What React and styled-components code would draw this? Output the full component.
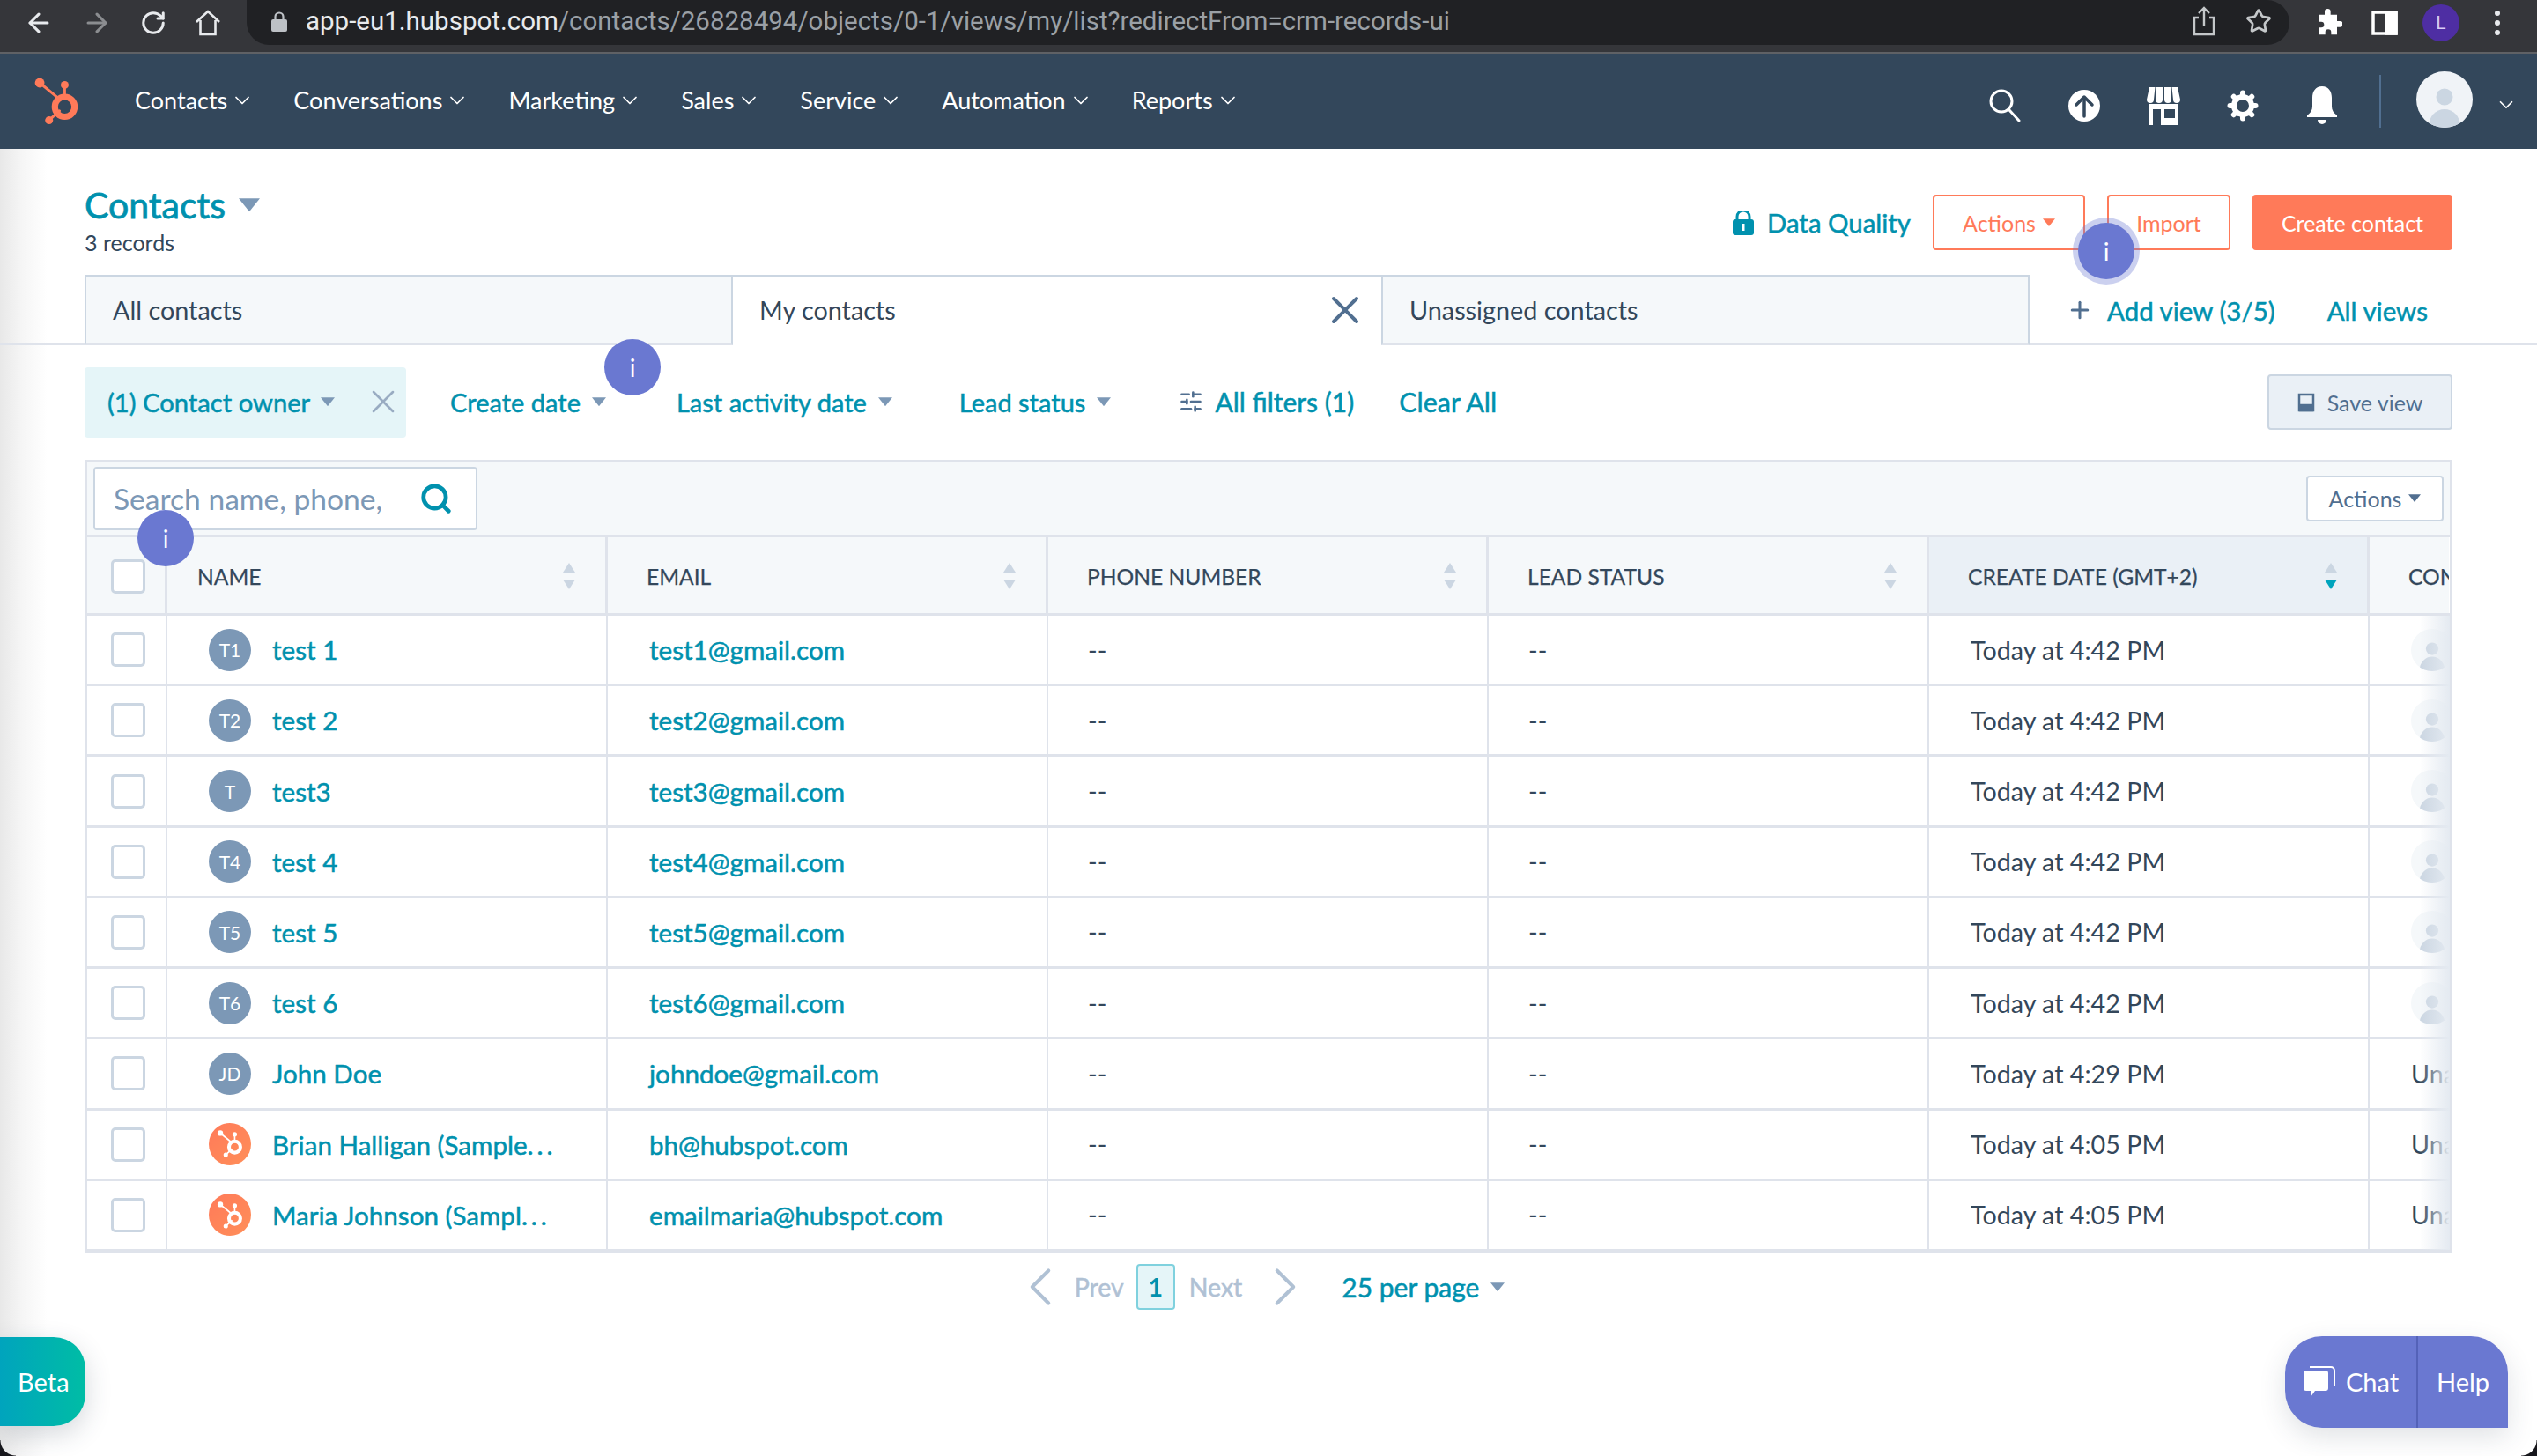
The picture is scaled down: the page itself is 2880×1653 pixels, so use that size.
import React from "react";
import styled, { createGlobalStyle, css } from "styled-components";
import { ArrowLeft, ArrowRight, RotateCw, Search, SlidersHorizontal, Star, X, ChevronDown, ChevronLeft, ChevronRight, Plus } from "lucide-react";

const GlobalStyle = createGlobalStyle`
  html, body { margin: 0; padding: 0; background: #fff; }
  * { box-sizing: border-box; }
  body { font-family: Lato, "Open Sans", sans-serif; color: #33475b; }
`;

// Lato has no medium cut here, so thicken the regular a little
const medium = css`
  font-weight: 400;
  -webkit-text-stroke: 0.5px currentColor;
`;

const Page = styled.div`
  position: relative;
  width: 2880px;
  height: 1653px;
  overflow: hidden;
  background: #fff;
`;

/* browser chrome */
const BrowserBar = styled.div`
  height: 61px;
  background: #35363a;
  border-bottom: 2px solid #5f6165;
  display: flex;
  align-items: flex-start;
  color: #e8eaed;
`;
const BrowserButtons = styled.div`
  width: 280px;
  height: 51px;
  display: flex;
  align-items: center;
  gap: 32px;
  padding-left: 27px;
`;
const UrlPill = styled.div`
  width: 2319px;
  height: 51px;
  background: #202124;
  border-radius: 0 26px 26px 26px;
  display: flex;
  align-items: center;
  padding: 0 20px 3px 28px;
  font-family: Roboto, sans-serif;
  font-size: 29.5px;
`;
const UrlText = styled.div`
  flex: 1;
  margin-left: 21px;
  color: #9aa0a6;
  white-space: nowrap;
  b { font-weight: 400; color: #e8eaed; }
`;
const PillIcons = styled.div`
  display: flex;
  align-items: center;
  gap: 34px;
  color: #c4c7c9;
`;
const BrowserRight = styled.div`
  flex: 1;
  height: 51px;
  display: flex;
  align-items: center;
  padding-left: 12px;
  color: #fff;
`;
const BrowserSlot = styled.div`
  width: 64px;
  display: flex;
  align-items: center;
  justify-content: center;
`;
const ProfileDot = styled.div`
  width: 42px;
  height: 42px;
  border-radius: 50%;
  background: #4e2ea3;
  color: #d9ccf5;
  font: 400 21px Roboto, sans-serif;
  display: flex;
  align-items: center;
  justify-content: center;
`;

/* hubspot nav */
const Nav = styled.nav`
  height: 108px;
  background: #33475b;
  display: flex;
  align-items: center;
  position: relative;
`;
const LogoSlot = styled.div`
  width: 153px;
  padding-left: 38px;
  display: flex;
  align-items: center;
  height: 100%;
`;
const NavLinks = styled.div`
  display: flex;
  gap: 44px;
  flex: 1;
  margin-top: -2px;
`;
const NavLink = styled.div`
  display: flex;
  align-items: center;
  gap: 3px;
  color: #fff;
  font-size: 27px;
  line-height: 34px;
  white-space: nowrap;
`;
const NavIcons = styled.div`
  display: flex;
  align-items: center;
  height: 100%;
  padding-right: 22px;
`;
const NavIcon = styled.div`
  width: 90px;
  height: 46px;
  margin-top: 10px;
  display: flex;
  align-items: center;
  justify-content: center;
  color: #fff;
`;
const NavDivider = styled.div`
  width: 2px;
  height: 60px;
  margin: 0 40px 0 20px;
  background: #516f90;
`;
const UserCircle = styled.div`
  width: 64px;
  height: 64px;
  margin-top: -4px;
  margin-right: 25px;
  border-radius: 50%;
  overflow: hidden;
`;
const UserChevron = styled(ChevronDown)`
  margin-top: 8px;
  color: #fff;
`;

/* page header */
const Content = styled.main`
  background: linear-gradient(90deg, #e8e8e8 0, #f6f6f6 26px, #fff 54px);
  height: 1484px;
`;
const HeaderRow = styled.div`
  height: 143px;
  padding: 0 96px;
  display: flex;
  justify-content: space-between;
`;
const TitleBlock = styled.div`
  padding-top: 42px;
`;
const Title = styled.h1`
  margin: 0 0 4px;
  display: flex;
  align-items: center;
  gap: 15px;
  font-size: 41px;
  line-height: 44px;
  font-weight: 400;
  -webkit-text-stroke: 0.8px currentColor;
  color: #0091ae;
`;
const Records = styled.div`
  font-size: 25px;
  line-height: 32px;
  color: #33475b;
`;
const HeaderActions = styled.div`
  padding-top: 52px;
  display: flex;
  align-items: flex-start;
`;
const DataQuality = styled.div`
  ${medium}
  display: flex;
  align-items: center;
  height: 63px;
  gap: 15px;
  margin-right: 25px;
  color: #0091ae;
  font-size: 29.4px;
`;
const OutlineButton = styled.button`
  height: 63px;
  width: ${(p) => p.$width}px;
  margin-right: 25px;
  border: 2px solid #ff7a59;
  border-radius: 4px;
  background: #fff;
  color: #ff7a59;
  font: 400 25px Lato, sans-serif;
  display: flex;
  align-items: center;
  justify-content: center;
  gap: 8px;
  padding: 0;
`;
const PrimaryButton = styled(OutlineButton)`
  margin-right: 0;
  background: #ff7a59;
  color: #fff;
`;

/* view tabs */
const TabRow = styled.div`
  height: 80px;
  padding-left: 96px;
  display: flex;
  border-bottom: 3px solid #dfe3eb;
`;
const Tab = styled.div`
  width: 736px;
  height: 80px;
  padding: 0 30px ${(p) => (p.$active ? "3px" : "0")} 30px;
  display: flex;
  align-items: center;
  justify-content: space-between;
  background: ${(p) => (p.$active ? "#fff" : "#f5f8fa")};
  border-top: 3px solid #cbd6e2;
  border-left: ${(p) => (p.$active ? "0" : "2px solid #cbd6e2")};
  border-right: ${(p) => (p.$active ? "0" : "2px solid #cbd6e2")};
  border-bottom: ${(p) => (p.$active ? "0" : "3px solid #dfe3eb")};
  font-size: 28.8px;
  color: #33475b;
  svg { margin-right: -15px; }
`;
const TabLinks = styled.div`
  ${medium}
  display: flex;
  align-items: center;
  padding: 3px 0 0 42px;
  color: #0091ae;
  font-size: 29.5px;
`;
const AddView = styled.div`
  display: flex;
  align-items: center;
  gap: 16px;
  margin-right: 59px;
  svg { color: #516f90; }
`;

/* filters */
const FilterRow = styled.div`
  height: 130px;
  padding: 25px 96px 0;
  display: flex;
  align-items: flex-start;
  gap: 50px;
`;
const OwnerPill = styled.div`
  ${medium}
  width: 365px;
  height: 80px;
  padding: 0 4px 2px 26px;
  border-radius: 4px;
  background: #e5f5f8;
  display: flex;
  align-items: center;
  color: #0091ae;
  font-size: 29.2px;
  white-space: nowrap;
  gap: 12px;
  svg:last-child { margin-left: auto; color: #99acc2; }
`;
const FilterLink = styled.div`
  ${medium}
  height: 80px;
  padding-bottom: 2px;
  display: flex;
  align-items: center;
  gap: ${(p) => p.$gap || 13}px;
  margin-right: ${(p) => p.$trail || 0}px;
  color: #0091ae;
  font-size: ${(p) => p.$size || 29}px;
  white-space: nowrap;
`;
const SaveView = styled.button`
  margin-left: auto;
  margin-top: 8px;
  width: 210px;
  height: 63px;
  border: 2px solid #cbd6e2;
  border-radius: 4px;
  background: #eaf0f6;
  color: #516f90;
  font: 400 25px Lato, sans-serif;
  display: flex;
  align-items: center;
  justify-content: center;
  gap: 14px;
  padding: 0;
`;

/* table */
const Table = styled.section`
  position: relative;
  margin: 0 96px;
  width: 2688px;
  height: 900px;
  border: 3px solid #dfe3eb;
  overflow: hidden;
`;
const TableTools = styled.div`
  height: 85px;
  background: #f5f8fa;
  padding: 5px 7px 0;
  display: flex;
  align-items: flex-start;
  justify-content: space-between;
  border-bottom: 3px solid #dfe3eb;
`;
const SearchBox = styled.div`
  width: 436px;
  height: 72px;
  padding: 0 26px 0 21px;
  background: #fff;
  border: 2px solid #cbd6e2;
  border-radius: 4px;
  display: flex;
  align-items: center;
  justify-content: space-between;
  color: #7c98b6;
  font-size: 33.6px;
  white-space: nowrap;
  svg { color: #0091ae; }
`;
const SmallActions = styled.button`
  width: 156px;
  height: 52px;
  margin-top: 10px;
  border: 2px solid #cbd6e2;
  border-radius: 4px;
  background: #fff;
  color: #516f90;
  font: 400 25px Lato, sans-serif;
  display: flex;
  align-items: center;
  justify-content: center;
  gap: 8px;
  padding: 0;
`;
const Row = styled.div`
  display: grid;
  grid-template-columns: 91px 500px 500px 500px 500px 500px 90px;
  height: ${(p) => (p.$head ? "89px" : "80.22px")};
  border-bottom: 3px solid #dfe3eb;
`;
const HeadCell = styled.div`
  display: flex;
  align-items: center;
  justify-content: space-between;
  padding: 2px 34px 0 ${(p) => p.$pad ?? 44}px;
  background: ${(p) => (p.$sorted ? "#eaf0f6" : "#f5f8fa")};
  border-right: ${(p) => (p.$last ? "0" : "3px solid #dfe3eb")};
  font-size: 24.6px;
  -webkit-text-stroke: 0.25px currentColor;
  color: #33475b;
  white-space: nowrap;
  overflow: hidden;
`;
const Cell = styled.div`
  display: flex;
  align-items: center;
  gap: 24px;
  padding-left: ${(p) => p.$pad ?? 47}px;
  border-right: ${(p) => (p.$last ? "0" : "2px solid #dfe3eb")};
  font-size: ${(p) => (p.$link ? "29.6px" : "28.7px")};
  color: ${(p) => (p.$link ? "#0091ae" : "#33475b")};
  ${(p) => p.$link && medium}
  white-space: nowrap;
  overflow: hidden;
`;
const Dots = styled.span`
  letter-spacing: 4px;
`;
const Checkbox = styled.div`
  width: 39px;
  height: 39px;
  flex: none;
  border: 3px solid #cbd6e2;
  border-radius: 5px;
  background: #fff;
`;
const Avatar = styled.div`
  width: 48px;
  height: 48px;
  flex: none;
  border-radius: 50%;
  background: ${(p) => (p.$brand ? "linear-gradient(135deg, #ff7a59, #ff8f59)" : "#7c98b6")};
  color: #fff;
  font-size: 21px;
  font-weight: 400;
  -webkit-text-stroke: 0;
  display: flex;
  align-items: center;
  justify-content: center;
`;
const GhostAvatar = styled.div`
  width: 48px;
  height: 48px;
  flex: none;
  border-radius: 50%;
  background: #f5f8fa;
  overflow: hidden;
`;
const FadeEdge = styled.div`
  position: absolute;
  top: 174px;
  right: 0;
  bottom: 0;
  width: 34px;
  background: linear-gradient(90deg, rgba(234, 240, 246, 0), #e4eaf1);
  pointer-events: none;
`;

/* pager */
const Pager = styled.div`
  padding: 13px 28px 0 0;
  display: flex;
  align-items: center;
  justify-content: center;
  font-size: 28.5px;
  height: 65px;
`;
const PagerWord = styled.span`
  ${medium}
  color: #b0c1d4;
  margin-left: ${(p) => p.$before || 0}px;
  margin-right: ${(p) => p.$after || 0}px;
`;
const PageNumber = styled.div`
  width: 44px;
  height: 52px;
  margin: 0 16px 0 14px;
  border: 2px solid #7fd1de;
  border-radius: 4px;
  background: #e5f5f8;
  color: #0091ae;
  font-weight: 700;
  display: flex;
  align-items: center;
  justify-content: center;
`;
const PerPage = styled.div`
  ${medium}
  margin-left: 27px;
  display: flex;
  align-items: center;
  gap: 13px;
  color: #0091ae;
  font-size: 30px;
`;

/* things floating over the page */
const Beacon = styled.div`
  position: absolute;
  left: ${(p) => p.$x - 32}px;
  top: ${(p) => p.$y - 32}px;
  width: 64px;
  height: 64px;
  border-radius: 50%;
  background: #6a78d1;
  box-shadow: ${(p) => (p.$ring ? "0 0 0 6px rgba(106, 120, 209, 0.35)" : "none")};
  color: #fff;
  font: 400 28px Lato, sans-serif;
  display: flex;
  align-items: center;
  justify-content: center;
`;
const BetaTab = styled.div`
  position: absolute;
  left: 0;
  top: 1518px;
  width: 97px;
  height: 101px;
  padding-left: 20px;
  border-radius: 0 36px 36px 0;
  background: linear-gradient(90deg, #00a4bd, #00bda5);
  box-shadow: 0 10px 30px rgba(45, 62, 80, 0.2);
  color: #fff;
  font-size: 29px;
  display: flex;
  align-items: center;
`;
const ChatWidget = styled.div`
  position: absolute;
  left: 2594px;
  top: 1517px;
  width: 253px;
  height: 104px;
  border-radius: 42px 42px 0 42px;
  background: #6a78d1;
  box-shadow: 0 10px 30px rgba(45, 62, 80, 0.15);
  display: grid;
  grid-template-columns: 151px 1fr;
  color: #fff;
  font-size: 29px;
`;
const ChatPart = styled.div`
  display: flex;
  align-items: center;
  justify-content: center;
  gap: 11px;
  padding-bottom: 2px;
  border-right: ${(p) => (p.$split ? "2px solid #5462b8" : "0")};
`;
const WindowCorner = styled.div`
  position: absolute;
  bottom: 0;
  ${(p) => (p.$right ? "right: 0;" : "left: 0;")}
  width: 18px;
  height: 18px;
  background: radial-gradient(
    circle at ${(p) => (p.$right ? "0 0" : "100% 0")},
    transparent 17px,
    #17171c 18px
  );
`;

const Caret = ({ color = "#7c98b6", size = 16 }) => (
  <svg width={size} height={size * 0.65} viewBox="0 0 16 10">
    <path d="M0 0h16L8 10z" fill={color} />
  </svg>
);

const Sprocket = ({ size = 44, color = "#ff7a59", hole = "transparent" }) => (
  <svg width={size} height={size * 1.05} viewBox="0 0 44 46">
    <g stroke={color} strokeWidth="2.6" fill="none" strokeLinecap="round">
      <path d="M6 5l17 14" />
      <path d="M30 8v12" strokeWidth="2.4" />
      <path d="M25 32l-9 8" />
    </g>
    <circle cx="6" cy="5" r="4.6" fill={color} />
    <circle cx="30" cy="7" r="3.8" fill={color} />
    <circle cx="15" cy="41" r="3.8" fill={color} />
    <circle cx="30" cy="28" r="9.5" fill={hole} stroke={color} strokeWidth="6" />
  </svg>
);

const SortArrows = ({ active }) => (
  <svg width="14" height="30" viewBox="0 0 16 30" preserveAspectRatio="none">
    <path d="M8 0l8 11H0z" fill="#cbd6e2" />
    <path d="M0 19h16l-8 11z" fill={active ? "#00a4bd" : "#cbd6e2"} />
  </svg>
);

const UserGlyph = ({ head = "#cbd6e2", body = "#cbd6e2", size = 48 }) => (
  <svg width={size} height={size} viewBox="0 0 64 64">
    <circle cx="32" cy="30" r="9.5" fill={head} />
    <ellipse cx="32" cy="62" rx="19" ry="20" fill={body} />
  </svg>
);

const Gear = () => (
  <svg width="36" height="36" viewBox="0 0 36 36" fill="#fff">
    {[0, 45, 90, 135, 180, 225, 270, 315].map((deg) => (
      <rect key={deg} x="15" y="0.5" width="6" height="9" rx="3" transform={`rotate(${deg} 18 18)`} />
    ))}
    <circle cx="18" cy="18" r="10" fill="none" stroke="#fff" strokeWidth="6" />
  </svg>
);

const Market = () => (
  <svg width="38" height="44" viewBox="0 0 38 44" fill="#fff">
    <path d="M3 1h6.5L8 15a4 4 0 0 1-8 0zM11 1h7v14a3.5 3.5 0 0 1-8 0zM20 1h7l1 14a3.5 3.5 0 0 1-8 0zM28.500 1H35l3 14a4 4 0 0 1-8 0z" />
    <path fillRule="evenodd" d="M3 20h32v24H3zM7 26v18h9V26zM20 26v10h12V26z" />
  </svg>
);

const Bell = () => (
  <svg width="34" height="44" viewBox="0 0 34 44" fill="#fff">
    <path d="M17 0c7.500 0 11 6 11 13v10c0 4 2 7 6 10v2H0v-2c4-3 6-6 6-10V13C6 6 9.500 0 17 0z" />
    <path d="M12 38h10a5 5 0 0 1-10 0z" />
  </svg>
);

const LockIcon = () => (
  <svg width="24" height="28" viewBox="0 0 24 28">
    <path d="M5 11V7a7 7 0 0 1 14 0v4" fill="none" stroke="#0091ae" strokeWidth="3" />
    <rect y="10" width="24" height="18" rx="3" fill="#0091ae" />
    <path d="M10.500 15h3v8h-3z" fill="#fff" />
  </svg>
);

const contacts = [
  { initials: "T1", name: "test 1", email: "test1@gmail.com", date: "Today at 4:42 PM" },
  { initials: "T2", name: "test 2", email: "test2@gmail.com", date: "Today at 4:42 PM" },
  { initials: "T", name: "test3", email: "test3@gmail.com", date: "Today at 4:42 PM" },
  { initials: "T4", name: "test 4", email: "test4@gmail.com", date: "Today at 4:42 PM" },
  { initials: "T5", name: "test 5", email: "test5@gmail.com", date: "Today at 4:42 PM" },
  { initials: "T6", name: "test 6", email: "test6@gmail.com", date: "Today at 4:42 PM" },
  { initials: "JD", name: "John Doe", email: "johndoe@gmail.com", date: "Today at 4:29 PM", unassigned: true },
  { brand: true, name: "Brian Halligan (Sample", cut: true, email: "bh@hubspot.com", date: "Today at 4:05 PM", unassigned: true },
  { brand: true, name: "Maria Johnson (Sampl", cut: true, email: "emailmaria@hubspot.com", date: "Today at 4:05 PM", unassigned: true },
];

const navItems = ["Contacts", "Conversations", "Marketing", "Sales", "Service", "Automation", "Reports"];

const App = () => {
  return (
    <Page>
      <GlobalStyle />
      <BrowserBar>
        <BrowserButtons>
          <ArrowLeft size={34} strokeWidth={2.2} />
          <ArrowRight size={34} strokeWidth={2.2} color="#8b8d90" />
          <RotateCw size={30} strokeWidth={2.4} />
          <svg width="30" height="32" viewBox="0 0 30 32" fill="none" stroke="#e8eaed" strokeWidth="2.6">
            <path d="M2 15L15 3l13 12M6.500 13v16h17V13" />
          </svg>
        </BrowserButtons>
        <UrlPill>
          <svg width="18" height="24" viewBox="0 0 18 24">
            <path d="M4.500 11V7a4.500 4.500 0 0 1 9 0v4" fill="none" stroke="#bdc1c6" strokeWidth="2.200" />
            <rect y="10" width="18" height="14" rx="2" fill="#bdc1c6" />
          </svg>
          <UrlText>
            <b>app-eu1.hubspot.com</b>/contacts/26828494/objects/0-1/views/my/list?redirectFrom=crm-records-ui
          </UrlText>
          <PillIcons>
            <svg width="26" height="34" viewBox="0 0 26 34" fill="none" stroke="#c4c7c9" strokeWidth="2.400">
              <path d="M7 13H2v19h22V13h-5M13 22V2M7 8l6-6 6 6" />
            </svg>
            <Star size={30} strokeWidth={2.2} />
          </PillIcons>
        </UrlPill>
        <BrowserRight>
          <BrowserSlot>
            <svg width="32" height="32" viewBox="0 0 24 24" fill="#fff">
              <path d="M9 2.500a2.500 2.500 0 0 1 5 0V5h5.500v5.500H22a2.500 2.500 0 0 1 0 5h-2.500V22h-5v-2a2.500 2.500 0 0 0-5 0v2H4v-6h2a2.500 2.500 0 0 0 0-5H4V5h5z" />
            </svg>
          </BrowserSlot>
          <BrowserSlot>
            <svg width="30" height="30" viewBox="0 0 30 30" fill="none" stroke="#fff" strokeWidth="3.500">
              <rect x="2" y="3" width="26" height="24" />
              <rect x="17" y="3" width="11" height="24" fill="#fff" />
            </svg>
          </BrowserSlot>
          <BrowserSlot>
            <ProfileDot>L</ProfileDot>
          </BrowserSlot>
          <BrowserSlot>
            <svg width="10" height="32" viewBox="0 0 10 32" fill="#e8eaed">
              <circle cx="5" cy="5" r="3" />
              <circle cx="5" cy="16" r="3" />
              <circle cx="5" cy="27" r="3" />
            </svg>
          </BrowserSlot>
        </BrowserRight>
      </BrowserBar>

      <Nav>
        <LogoSlot>
          <Sprocket size={52} />
        </LogoSlot>
        <NavLinks>
          {navItems.map((item) => (
            <NavLink key={item}>
              {item}
              <ChevronDown size={28} strokeWidth={1.5} />
            </NavLink>
          ))}
        </NavLinks>
        <NavIcons>
          <NavIcon>
            <svg width="36" height="38" viewBox="0 0 36 38" fill="none" stroke="#fff" strokeWidth="3">
              <circle cx="14" cy="14" r="12" />
              <path d="M23 24l11 12" strokeLinecap="round" />
            </svg>
          </NavIcon>
          <NavIcon>
            <svg width="36" height="36" viewBox="0 0 36 36">
              <circle cx="18" cy="18" r="18" fill="#fff" />
              <path d="M18 30V8M9 17l9-9 9 9" fill="none" stroke="#33475b" strokeWidth="3.500" strokeLinecap="round" strokeLinejoin="round" />
            </svg>
          </NavIcon>
          <NavIcon>
            <Market />
          </NavIcon>
          <NavIcon>
            <Gear />
          </NavIcon>
          <NavIcon>
            <Bell />
          </NavIcon>
          <NavDivider />
          <UserCircle>
            <svg width="64" height="64" viewBox="0 0 64 64">
              <rect width="64" height="64" fill="#f0f3f7" />
              <circle cx="32" cy="29" r="9.500" fill="#cbd6e2" />
              <ellipse cx="32" cy="62" rx="18" ry="19" fill="#cbd6e2" />
            </svg>
          </UserCircle>
          <UserChevron size={26} strokeWidth={1.6} />
        </NavIcons>
      </Nav>

      <Content>
        <HeaderRow>
          <TitleBlock>
            <Title>
              Contacts
              <Caret size={24} />
            </Title>
            <Records>3 records</Records>
          </TitleBlock>
          <HeaderActions>
            <DataQuality>
              <LockIcon />
              Data Quality
            </DataQuality>
            <OutlineButton $width={173}>
              Actions
              <Caret color="#ff7a59" size={14} />
            </OutlineButton>
            <OutlineButton $width={140}>Import</OutlineButton>
            <PrimaryButton $width={227}>Create contact</PrimaryButton>
          </HeaderActions>
        </HeaderRow>

        <TabRow>
          <Tab>All contacts</Tab>
          <Tab $active>
            My contacts
            <X size={52} strokeWidth={1.8} color="#516f90" />
          </Tab>
          <Tab>Unassigned contacts</Tab>
          <TabLinks>
            <AddView>
              <Plus size={30} strokeWidth={2.4} />
              Add view (3/5)
            </AddView>
            All views
          </TabLinks>
        </TabRow>

        <FilterRow>
          <OwnerPill>
            (1) Contact owner
            <Caret />
            <X size={44} strokeWidth={1.4} />
          </OwnerPill>
          <FilterLink $trail={30}>
            Create date
            <Caret />
          </FilterLink>
          <FilterLink $trail={26}>
            Last activity date
            <Caret />
          </FilterLink>
          <FilterLink $trail={27}>
            Lead status
            <Caret />
          </FilterLink>
          <FilterLink $gap={13} $trail={1} $size={30}>
            <SlidersHorizontal size={28} strokeWidth={2.2} color="#516f90" />
            All filters (1)
          </FilterLink>
          <FilterLink $size={30.5}>Clear All</FilterLink>
          <SaveView>
            <svg width="20" height="22" viewBox="0 0 20 22" fill="none" stroke="#516f90" strokeWidth="2.500">
              <path d="M2 2h16v18H2z" />
              <path d="M3 14h14v6H3z" fill="#516f90" />
            </svg>
            Save view
          </SaveView>
        </FilterRow>

        <Table>
          <TableTools>
            <SearchBox>
              Search name, phone,
              <Search size={38} strokeWidth={3} />
            </SearchBox>
            <SmallActions>
              Actions
              <Caret color="#516f90" size={14} />
            </SmallActions>
          </TableTools>
          <Row $head>
            <HeadCell $pad={27}>
              <Checkbox />
            </HeadCell>
            <HeadCell $pad={34}>
              NAME
              <SortArrows />
            </HeadCell>
            <HeadCell>
              EMAIL
              <SortArrows />
            </HeadCell>
            <HeadCell>
              PHONE NUMBER
              <SortArrows />
            </HeadCell>
            <HeadCell>
              LEAD STATUS
              <SortArrows />
            </HeadCell>
            <HeadCell $sorted>
              CREATE DATE (GMT+2)
              <SortArrows active />
            </HeadCell>
            <HeadCell $last>CONTACT OWNER</HeadCell>
          </Row>
          {contacts.map((c) => (
            <Row key={c.email}>
              <Cell $pad={27}>
                <Checkbox />
              </Cell>
              <Cell $link>
                {c.brand ? (
                  <Avatar $brand>
                    <Sprocket size={30} color="#fff" />
                  </Avatar>
                ) : (
                  <Avatar>{c.initials}</Avatar>
                )}
                <span>
                  {c.name}
                  {c.cut && <Dots>...</Dots>}
                </span>
              </Cell>
              <Cell $link>{c.email}</Cell>
              <Cell $pad={45}>--</Cell>
              <Cell $pad={45}>--</Cell>
              <Cell>{c.date}</Cell>
              <Cell $last>
                {c.unassigned ? (
                  "Unassigned"
                ) : (
                  <GhostAvatar>
                    <UserGlyph />
                  </GhostAvatar>
                )}
              </Cell>
            </Row>
          ))}
          <FadeEdge />
        </Table>

        <Pager>
          <ChevronLeft size={74} strokeWidth={1.3} color="#b0c1d4" />
          <PagerWord $before={2}>Prev</PagerWord>
          <PageNumber>1</PageNumber>
          <PagerWord $after={12}>Next</PagerWord>
          <ChevronRight size={74} strokeWidth={1.3} color="#b0c1d4" />
          <PerPage>
            25 per page
            <Caret />
          </PerPage>
        </Pager>
      </Content>

      <Beacon $x={2391} $y={285} $ring>i</Beacon>
      <Beacon $x={718} $y={417}>i</Beacon>
      <Beacon $x={188} $y={611}>i</Beacon>

      <BetaTab>Beta</BetaTab>
      <ChatWidget>
        <ChatPart $split>
          <svg width="38" height="38" viewBox="0 0 38 38" fill="#fff">
            <path d="M4 7h22a3 3 0 0 1 3 3v17a3 3 0 0 1-3 3H14l-5 7v-7H4a3 3 0 0 1-3-3V10a3 3 0 0 1 3-3z" />
            <path d="M8 3h24a4 4 0 0 1 4 4v18" fill="none" stroke="#fff" strokeWidth="2" />
          </svg>
          Chat
        </ChatPart>
        <ChatPart>Help</ChatPart>
      </ChatWidget>
      <WindowCorner />
      <WindowCorner $right />
    </Page>
  );
};

export default App;
